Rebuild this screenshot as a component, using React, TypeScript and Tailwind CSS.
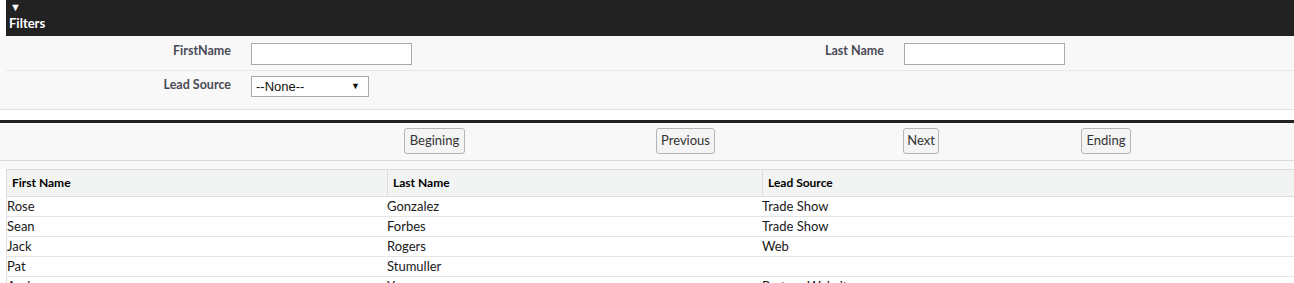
const rows = [
  { first: "Rose", last: "Gonzalez", source: "Trade Show" },
  { first: "Sean", last: "Forbes", source: "Trade Show" },
  { first: "Jack", last: "Rogers", source: "Web" },
  { first: "Pat", last: "Stumuller", source: "" },
  { first: "Andy", last: "Young", source: "Partner Website" },
];

const btn =
  "h-[26px] border border-[#b5b5b5] rounded-[3px] bg-[#f4f4f4] text-[13px] text-[#333] flex items-center justify-center";

export default function App() {
  return (
    <div className="w-[1294px] h-[283px] overflow-hidden bg-white font-['Lato',sans-serif] text-[13px] text-[#181818]">
      {/* Filters */}
      <div className="ml-[6px] h-[36px] bg-[#222222] text-white pl-[3px] flex flex-col">
        <span className="text-[11px] leading-[10px] mt-[2px] pl-[1px]">▼</span>
        <span className="text-[13px] font-bold leading-[16px] mt-[3px]">Filters</span>
      </div>
      <div className="bg-[#f8f8f8] border-b border-[#e2e2e2] h-[74px]">
        <div className="ml-[6px] grid grid-cols-[235px_412px_241px_1fr] h-[35px] border-b border-[#e8e8e8] items-start">
          <label className="text-right pr-[10px] pt-[6px] text-[12.5px] font-bold text-[#4a4a56]">FirstName</label>
          <div className="pl-[10px] pt-[7px]">
            <input className="w-[161px] h-[22px] border border-[#a9a9a9] bg-white" />
          </div>
          <label className="text-right pr-[10px] pt-[6px] text-[12.5px] font-bold text-[#4a4a56]">Last Name</label>
          <div className="pl-[10px] pt-[7px]">
            <input className="w-[161px] h-[22px] border border-[#a9a9a9] bg-white" />
          </div>
        </div>
        <div className="ml-[6px] grid grid-cols-[235px_412px_241px_1fr] items-start">
          <label className="text-right pr-[10px] pt-[5px] text-[12.5px] font-bold text-[#4a4a56]">Lead Source</label>
          <div className="pl-[10px] pt-[5px]">
            <div className="w-[118px] h-[21px] border border-[#a9a9a9] bg-white flex items-center justify-between pl-[4px] pr-[8px] font-['Liberation_Sans',sans-serif] text-[13px] text-[#111]">
              <span>--None--</span>
              <span className="text-[9px]">▼</span>
            </div>
          </div>
        </div>
      </div>

      {/* Pagination */}
      <div className="mt-[10px] border-t-[3px] border-[#222222] bg-[#f8f8f8] h-[41px] border-b border-b-[#dcdcdc] flex items-start pt-[5px]">
        <button className={`${btn} ml-[404px] w-[61px]`}>Begining</button>
        <button className={`${btn} ml-[191px] w-[59px]`}>Previous</button>
        <button className={`${btn} ml-[188px] w-[36px]`}>Next</button>
        <button className={`${btn} ml-[142px] w-[50px]`}>Ending</button>
      </div>
      <div className="h-[8px] bg-[#f8f8f8]" />

      {/* Table */}
      <div className="ml-[6px] border-l border-t border-[#dddddd]">
        <div className="grid grid-cols-[380px_375px_1fr] h-[27px] bg-[#f2f3f3] border-b border-[#dddddd] text-[12px] font-bold text-black">
          <div className="pl-[5px] flex items-center">First Name</div>
          <div className="pl-[5px] flex items-center border-l border-[#dddddd]">Last Name</div>
          <div className="pl-[5px] flex items-center border-l border-[#dddddd]">Lead Source</div>
        </div>
        {rows.map((r, i) => (
          <div key={i} className="grid grid-cols-[380px_375px_1fr] h-[20px] border-b border-[#e5e5e5] items-center">
            <div className="pl-[0px]">{r.first}</div>
            <div className="pl-[0px]">{r.last}</div>
            <div className="pl-[0px]">{r.source}</div>
          </div>
        ))}
      </div>
    </div>
  );
}
